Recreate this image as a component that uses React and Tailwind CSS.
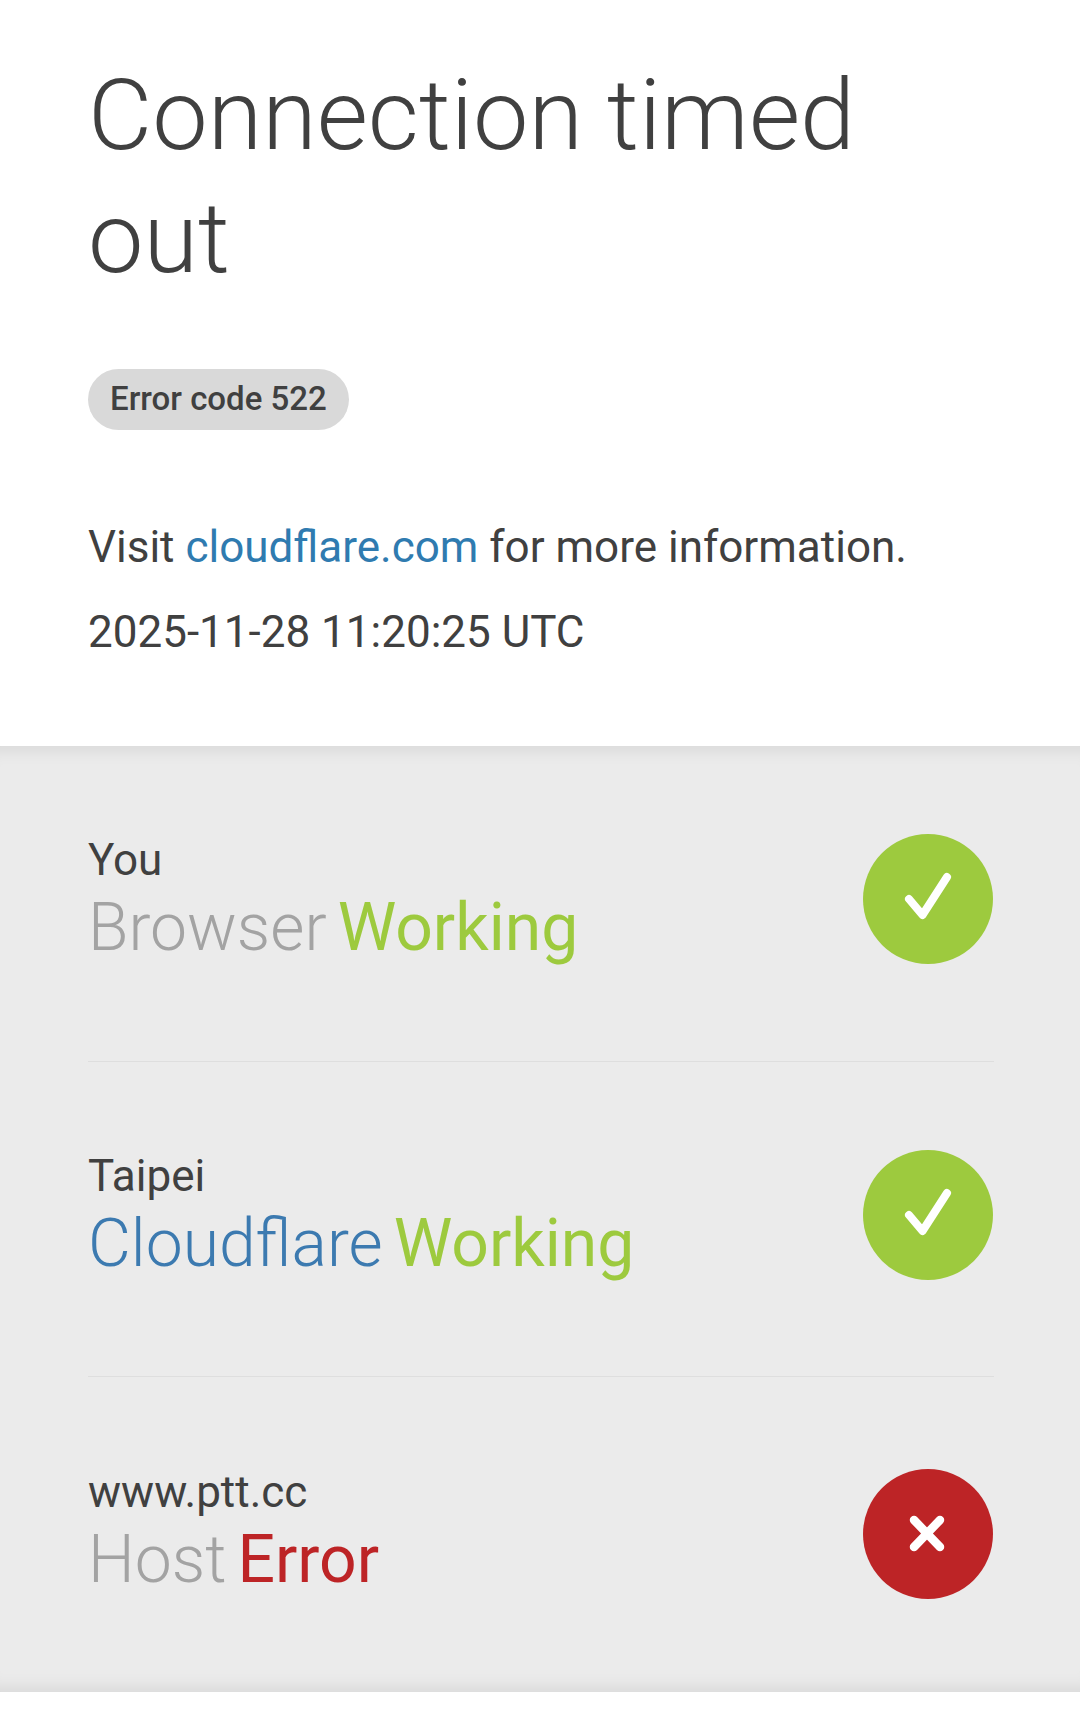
import React from 'react';

const rows = [
  { place: 'You', name: 'Browser', nameClass: 'text-[#a3a3a3]', status: 'Working', ok: true },
  { place: 'Taipei', name: 'Cloudflare', nameClass: 'text-[#3c7ab0]', status: 'Working', ok: true },
  { place: 'www.ptt.cc', name: 'Host', nameClass: 'text-[#a3a3a3]', status: 'Error', ok: false },
];

function StatusIcon({ ok }) {
  return (
    <div className={`w-[130px] h-[130px] mr-[1px] rounded-full shrink-0 ${ok ? 'bg-[#9dca3e] mb-[8px]' : 'bg-[#bd2426] mb-[1px]'}`}>
      {ok ? (
        <svg width="130" height="130" viewBox="0 0 130 130" fill="none">
          <path d="M46 65 L59.5 81 L84 43" stroke="#fff" strokeWidth="8" strokeLinecap="round" strokeLinejoin="round" />
        </svg>
      ) : (
        <svg width="130" height="130" viewBox="0 0 130 130" fill="none">
          <path d="M51 51 L77 78 M77 51 L51 78" stroke="#fff" strokeWidth="8.5" strokeLinecap="round" />
        </svg>
      )}
    </div>
  );
}

export default function App() {
  return (
    <div className="w-[1080px] h-[1725px] bg-white font-['Roboto',sans-serif] text-[#404040] overflow-hidden">
      <div className="h-[746px] px-[88px] pt-[54px]">
        <h1 className="text-[99px] leading-[123px] font-light">Connection timed out</h1>
        <div className="mt-[69px] inline-flex items-center h-[61px] px-[22px] pb-[2px] rounded-full bg-[#d9d9d9] text-[33px] font-medium">
          Error code 522
        </div>
        <p className="mt-[84px] text-[44px] leading-[66px]">
          Visit <span className="text-[#2f7bb0]">cloudflare.com</span> for more information.
        </p>
        <p className="mt-[19px] text-[44px] leading-[66px]">2025-11-28 11:20:25 UTC</p>
      </div>
      <div className="h-[946px] bg-[#ebebeb] pl-[88px] pr-[86px] shadow-[inset_0_18px_18px_-16px_rgba(0,0,0,0.1),inset_0_-18px_18px_-16px_rgba(0,0,0,0.1)]">
        {rows.map((row, i) => (
          <div key={row.place} className={`h-[315.5px] flex items-center justify-between ${i < 2 ? 'border-b border-[#dedede]' : ''}`}>
            <div className="pb-[4px]">
              <div className="text-[44px] leading-[50px] mb-[4px]">{row.place}</div>
              <div className="flex gap-[11px] text-[66px] leading-[78px] font-light">
                <span className={row.nameClass}>{row.name}</span>
                <span className={`font-normal ${row.ok ? 'text-[#9dca3e]' : 'text-[#bd2426]'}`}>{row.status}</span>
              </div>
            </div>
            <StatusIcon ok={row.ok} />
          </div>
        ))}
      </div>
    </div>
  );
}
